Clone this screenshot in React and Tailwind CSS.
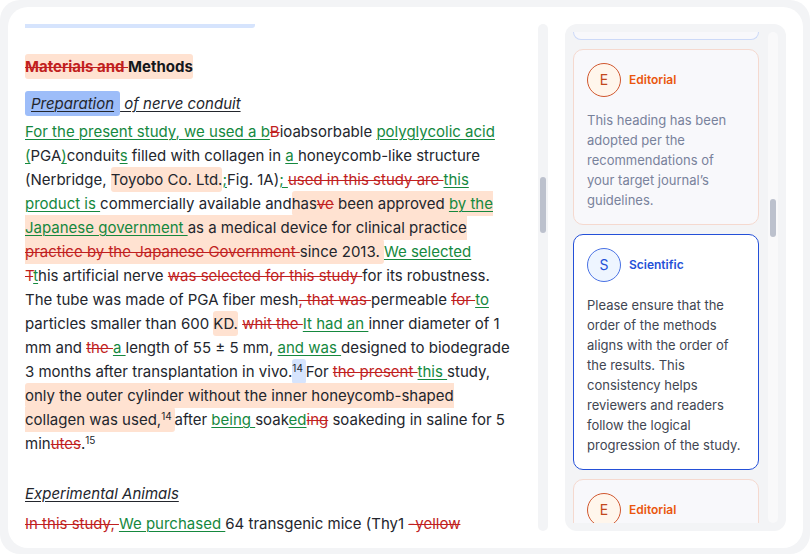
import clsx from "clsx";

const comments = [
  {
    id: 1,
    type: "Editorial",
    text: "This heading has been adopted per the recommendations of your target journal’s guidelines.",
  },
  {
    id: 2,
    type: "Scientific",
    active: true,
    text: "Please ensure that the order of the methods aligns with the order of the results. This consistency helps reviewers and readers follow the logical progression of the study.",
  },
  { id: 3, type: "Editorial", text: "" },
];

function Ins({ children }) {
  return (
    <ins className="text-[#15883e] underline decoration-1 underline-offset-2">
      {children}
    </ins>
  );
}

function Del({ children }) {
  return <del className="text-[#c11f1f] line-through decoration-1">{children}</del>;
}

function Mark({ children, className = "bg-[#ffe2d1]" }) {
  return (
    <mark className={clsx("rounded-[3px] py-[3px] text-inherit", className)}>
      {children}
    </mark>
  );
}

function Ref({ children }) {
  return <sup className="text-[10px]">{children}</sup>;
}

function ScrollBar({ track, thumb }) {
  return (
    <div className={clsx("w-[10px] shrink-0 rounded-full px-[2px]", track)}>
      <div className={clsx("w-full rounded-full bg-[#bcc1cd]", thumb)} />
    </div>
  );
}

function Comment({ type, text, active }) {
  const editorial = type === "Editorial";
  return (
    <article
      className={clsx(
        "shrink-0 rounded-[10px] border pt-[13px] pr-4 pb-[14px] pl-[13px]",
        active ? "border-[#2450d8] bg-white" : "border-[#f5d9cf] bg-[#f8f8fb]"
      )}
    >
      <header className="flex items-center gap-2">
        <span
          className={clsx(
            "flex size-[34px] items-center justify-center rounded-full border text-sm",
            editorial
              ? "border-[#d0572f] bg-[#fff6ec] text-[#c2481c]"
              : "border-[#4a72e4] bg-[#eef5ff] text-[#2450d8]"
          )}
        >
          {type[0]}
        </span>
        <h3
          className={clsx(
            "text-xs font-semibold",
            editorial ? "text-[#ea560e]" : "text-[#2450d8]"
          )}
        >
          {type}
        </h3>
      </header>
      <p
        className={clsx(
          "mt-[13px] text-[13px] leading-5",
          active ? "text-[#414652]" : "text-[#78829b]"
        )}
      >
        {text}
      </p>
    </article>
  );
}

function Manuscript() {
  return (
    <main className="min-w-0 flex-1 text-[15px] leading-6 whitespace-nowrap text-[#23262d]">
      <div className="h-1 w-[230px] rounded-br-[3px] bg-[#d6e4fd]" />

      <h1 className="mt-[27px] font-bold text-[#15171c]">
        <Mark>
          <Del>Materials and </Del>Methods
        </Mark>
      </h1>

      <h2 className="mt-[13px] italic underline decoration-1 underline-offset-2">
        <Mark className="bg-[#9dbdf9] px-[6px]">Preparation</Mark> of nerve conduit
      </h2>

      <p className="mt-1">
        <Ins>For the present study, we used a b</Ins>
        <Del>B</Del>ioabsorbable <Ins>polyglycolic acid</Ins>
        <br />
        <Ins>(</Ins>PGA<Ins>)</Ins>conduit<Ins>s</Ins> filled with collagen in{" "}
        <Ins>a </Ins>honeycomb-like structure
        <br />
        (Nerbridge, <Mark>Toyobo Co. Ltd.</Mark>
        <Ins>;</Ins>Fig. 1A)<Ins>; </Ins>
        <Del>used in this study are </Del>
        <Ins>this</Ins>
        <br />
        <Ins>product is </Ins>commercially available and
        <Mark>
          has<Del>ve</Del> been approved <Ins>by the</Ins>
          <br />
          <Ins>Japanese government </Ins>as a medical device for clinical practice
          <br />
          <Del>practice by the Japanese Government </Del>since 2013.{" "}
        </Mark>
        <Ins>We selected</Ins>
        <br />
        <Del>T</Del>
        <Ins>t</Ins>his artificial nerve <Del>was selected for this study </Del>for
        its robustness.
        <br />
        The tube was made of PGA fiber mesh<Del>, that was </Del>permeable{" "}
        <Del>for </Del>
        <Ins>to</Ins>
        <br />
        particles smaller than 600 <Mark>KD.</Mark> <Del>whit the </Del>
        <Ins>It had an </Ins>inner diameter of 1
        <br />
        mm and <Del>the </Del>
        <Ins>a </Ins>length of 55 ± 5 mm, <Ins>and was </Ins>designed to biodegrade
        <br />3 months after transplantation in vivo.
        <Mark className="bg-[#d6e4fd]">
          <Ref>14 </Ref>
        </Mark>
        For <Del>the present </Del>
        <Ins>this </Ins>study,
        <br />
        <Mark>
          only the outer cylinder without the inner honeycomb-shaped
          <br />
          collagen was used,<Ref>14 </Ref>
        </Mark>
        after <Ins>being </Ins>soak<Ins>ed</Ins>
        <Del>ing</Del> soakeding in saline for 5
        <br />
        min<Del>utes</Del>.<Ref>15</Ref>
      </p>

      <h2 className="mt-[26px] italic underline decoration-1 underline-offset-2">
        Experimental Animals
      </h2>
      <p className="mt-[6px]">
        <Del>In this study, </Del>
        <Ins>We purchased </Ins>64 transgenic mice (Thy1 <Del>-yellow</Del>
      </p>
    </main>
  );
}

export default function App() {
  return (
    <div className="flex h-screen overflow-hidden rounded-[20px] bg-[#f3f4f6] pt-[7px] pr-[7px] pb-[6px] pl-2 font-['Inter',sans-serif]">
      <div className="flex min-w-0 flex-1 rounded-[20px] bg-white p-[17px]">
        <Manuscript />
        <ScrollBar track="bg-[#f3f4f6] pt-[153px]" thumb="h-14" />

        <aside className="ml-[17px] flex w-[221px] shrink-0 gap-[9px] rounded-xl bg-[#f3f4f6] p-2">
          <div className="flex min-w-0 flex-1 flex-col gap-[9px] overflow-hidden">
            <div className="h-2 shrink-0 rounded-b-[10px] border border-t-0 border-[#ccd9f8] bg-[#f8f8fb]" />
            {comments.map((comment) => (
              <Comment key={comment.id} {...comment} />
            ))}
          </div>
          <ScrollBar track="bg-[#f9f9fa] pt-[167px]" thumb="h-[38px]" />
        </aside>
      </div>
    </div>
  );
}
